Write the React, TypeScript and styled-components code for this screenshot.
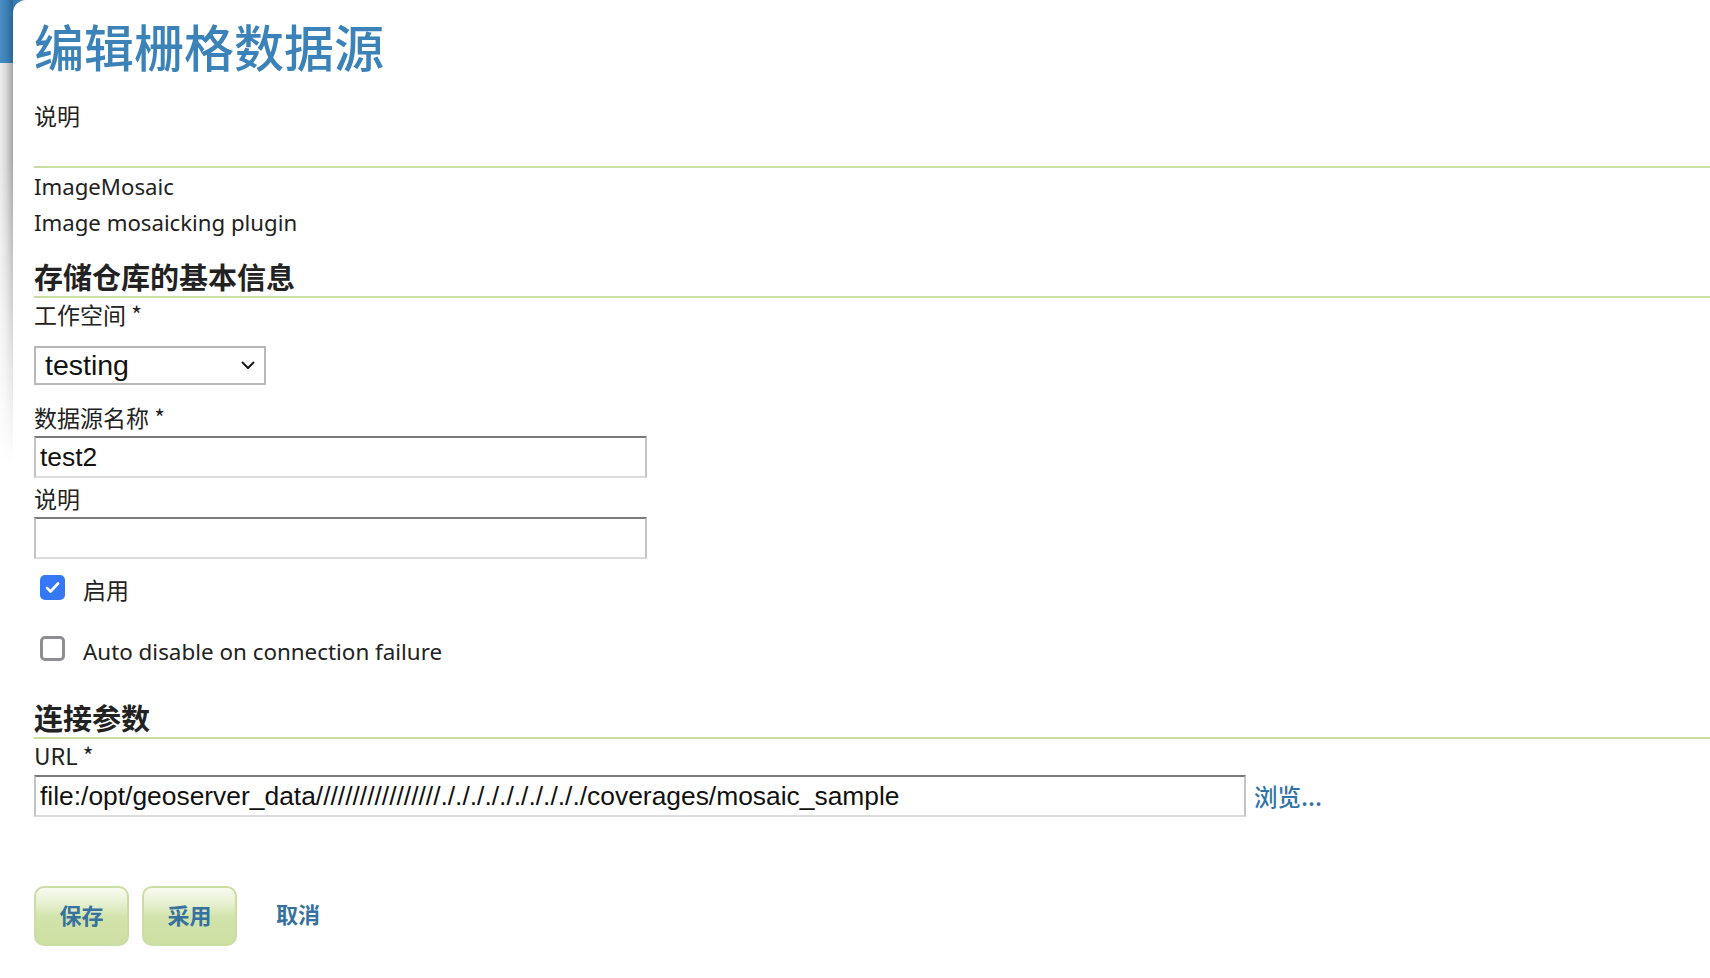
import React from "react";
import styled, { createGlobalStyle } from "styled-components";

const GlobalStyle = createGlobalStyle`
  html, body { margin: 0; padding: 0; background: #fff; }
  body {
    font-family: "Noto Sans", "Noto Sans CJK SC", sans-serif;
    color: #222;
  }
  * { box-sizing: border-box; }
`;

const CJK = `"Noto Sans CJK SC", "Noto Sans", sans-serif`;
const GREEN_LINE = "#c9de9f";
const LINK_BLUE = "#36719f";

const Page = styled.div`
  display: flex;
  min-height: 978px;
  background: linear-gradient(#3a7db2, #3a7db2) 0 0 / 40px 40px no-repeat, #fff;
`;

const Rail = styled.div`
  width: 13px;
  flex: none;
  display: flex;
  flex-direction: column;
`;

const RailCap = styled.div`
  height: 63px;
  background: linear-gradient(to right, #4a8dc2 0%, #3b7eb3 55%, #2a6694 100%);
`;

const RailShade = styled.div`
  height: 400px;
  background: linear-gradient(to right, #ededed 0%, #d8d8d8 45%, #a6a6a6 100%);
  -webkit-mask-image: linear-gradient(to bottom, #000 0%, #000 25%, transparent 100%);
  mask-image: linear-gradient(to bottom, #000 0%, #000 25%, transparent 100%);
`;

const Panel = styled.main`
  flex: 1;
  min-width: 0;
  background: #fff;
  border-top-left-radius: 13px;
  padding: 15px 0 40px 21px;
  display: flex;
  flex-direction: column;
`;

const Title = styled.h1`
  margin: 0;
  font: 500 50px/60px ${CJK};
  color: #3a82b8;
`;

const Lead = styled.p`
  margin: 25px 0 0;
  font: 400 23px/30px ${CJK};
  color: #222;
`;

const Rule = styled.hr`
  margin: 36px 0 0;
  border: 0;
  height: 2px;
  background: ${GREEN_LINE};
`;

const InfoLine = styled.div<{ $first?: boolean }>`
  margin-top: ${(p) => (p.$first ? "1px" : "0")};
  font: 400 22.2px/36px "Noto Sans", sans-serif;
  color: #222;
`;

const SectionHeading = styled.h2<{ $gap: number }>`
  margin: ${(p) => p.$gap}px 0 0;
  padding-bottom: 2px;
  font: 700 29px/36px ${CJK};
  color: #222;
  border-bottom: 2px solid ${GREEN_LINE};
`;

const FieldLabel = styled.label<{ $gap: number }>`
  display: block;
  margin-top: ${(p) => p.$gap}px;
  font: 400 23px/30px ${CJK};
  color: #222;
`;

const SelectBox = styled.div`
  margin-top: 17px;
  width: 232px;
  height: 39px;
  border: 2px solid #b8b8b8;
  background: #fff;
  display: flex;
  align-items: center;
  justify-content: space-between;
  padding: 0 9px 0 9px;
  font: 400 28.5px/1 "Liberation Sans", Arial, sans-serif;
  color: #111;
`;

const TextInput = styled.input<{ $gap: number; $width: number }>`
  display: block;
  margin-top: ${(p) => p.$gap}px;
  width: ${(p) => p.$width}px;
  height: 42px;
  padding: 0 4px;
  border-style: solid;
  border-width: 2px;
  border-color: #7a7a7a #c4c4c4 #dcdcdc #c4c4c4;
  background: #fff;
  font: 400 26.4px/1 "Liberation Sans", Arial, sans-serif;
  color: #111;
  outline: none;
`;

const CheckRow = styled.label<{ $gap: number }>`
  display: flex;
  align-items: center;
  gap: 18px;
  height: 30px;
  margin-top: ${(p) => p.$gap}px;
  padding-left: 6px;
`;

const CheckBox = styled.span<{ $checked?: boolean }>`
  width: 25px;
  height: 25px;
  flex: none;
  border-radius: 5px;
  display: flex;
  align-items: center;
  justify-content: center;
  margin-top: -3px;
  background: ${(p) => (p.$checked ? "#3478f6" : "#fff")};
  border: ${(p) => (p.$checked ? "none" : "3px solid #8e8e94")};
`;

const CheckText = styled.span<{ $latin?: boolean }>`
  margin-top: ${(p) => (p.$latin ? "4px" : "0")};
  font: 400 ${(p) => (p.$latin ? "22.4px" : "23px")} / 30px
    ${(p) => (p.$latin ? `"Noto Sans", sans-serif` : CJK)};
  color: #222;
`;

const UrlRow = styled.div`
  display: flex;
  align-items: center;
  gap: 8px;
  margin-top: 5px;
`;

const BrowseLink = styled.a`
  font: 500 23.5px/30px ${CJK};
  color: #2f73a7;
  text-decoration: none;
  cursor: pointer;
`;

const ButtonBar = styled.div`
  display: flex;
  align-items: center;
  gap: 13px;
  margin-top: 69px;
`;

const GreenButton = styled.button`
  width: 95px;
  height: 60px;
  border: 2px solid #c8dea2;
  border-radius: 10px;
  background: linear-gradient(to bottom, #f8fbf1 0%, #e6f0d0 28%, #d2e3ab 52%, #cde0a3 100%);
  font: 700 22px/1 ${CJK};
  color: ${LINK_BLUE};
  cursor: pointer;
  padding: 0 0 5px;
`;

const CancelLink = styled.a`
  margin-left: 26px;
  margin-top: -6px;
  font: 700 22px/1 ${CJK};
  color: ${LINK_BLUE};
  text-decoration: none;
  cursor: pointer;
`;

const Chevron = () => (
  <svg width="14" height="9" viewBox="0 0 14 9" fill="none">
    <polyline
      points="1.5,1.5 7,7 12.5,1.5"
      stroke="#1a1a1a"
      strokeWidth="2"
      strokeLinecap="round"
      strokeLinejoin="round"
    />
  </svg>
);

const CheckMark = () => (
  <svg width="19" height="19" viewBox="0 0 24 24" fill="none">
    <path
      d="M5 12.5l4.5 4.5L19 7"
      stroke="#fff"
      strokeWidth="3.4"
      strokeLinecap="round"
      strokeLinejoin="round"
    />
  </svg>
);

const URL_VALUE =
  "file:/opt/geoserver_data" + "/".repeat(17) + "./".repeat(10) + "coverages/mosaic_sample";

export default function App() {
  return (
    <>
      <GlobalStyle />
      <Page>
        <Rail>
          <RailCap />
          <RailShade />
        </Rail>
        <Panel>
          <Title>编辑栅格数据源</Title>
          <Lead>说明</Lead>
          <Rule />
          <InfoLine $first>ImageMosaic</InfoLine>
          <InfoLine>Image mosaicking plugin</InfoLine>

          <SectionHeading $gap={17}>存储仓库的基本信息</SectionHeading>
          <FieldLabel $gap={1}>工作空间 *</FieldLabel>
          <SelectBox>
            <span>testing</span>
            <Chevron />
          </SelectBox>

          <FieldLabel $gap={17}>数据源名称 *</FieldLabel>
          <TextInput $gap={4} $width={613} defaultValue="test2" />
          <FieldLabel $gap={5}>说明</FieldLabel>
          <TextInput $gap={4} $width={613} defaultValue="" />

          <CheckRow $gap={15}>
            <CheckBox $checked>
              <CheckMark />
            </CheckBox>
            <CheckText>启用</CheckText>
          </CheckRow>
          <CheckRow $gap={31}>
            <CheckBox />
            <CheckText $latin>Auto disable on connection failure</CheckText>
          </CheckRow>

          <SectionHeading $gap={34}>连接参数</SectionHeading>
          <FieldLabel $gap={1}>URL *</FieldLabel>
          <UrlRow>
            <TextInput $gap={0} $width={1212} defaultValue={URL_VALUE} />
            <BrowseLink>浏览...</BrowseLink>
          </UrlRow>

          <ButtonBar>
            <GreenButton>保存</GreenButton>
            <GreenButton>采用</GreenButton>
            <CancelLink>取消</CancelLink>
          </ButtonBar>
        </Panel>
      </Page>
    </>
  );
}
